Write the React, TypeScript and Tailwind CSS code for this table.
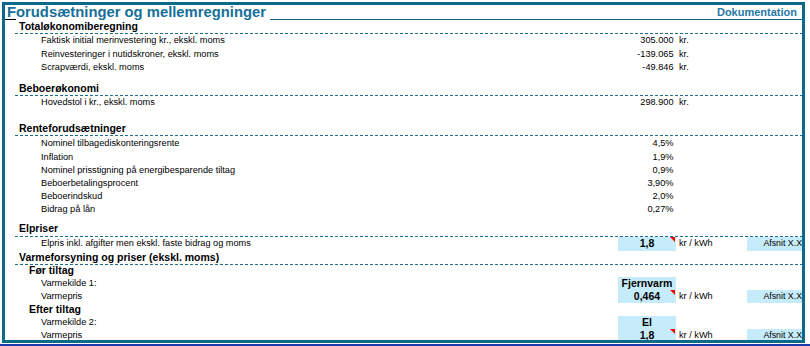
import React from "react";

const TEAL = "bg-[#0b6a8a]";

function Dash() {
  return (
    <div className="ml-[10px] h-px shrink-0 bg-[repeating-linear-gradient(to_right,#1d6d8a_0px,#1d6d8a_3px,transparent_3px,transparent_5px)]" />
  );
}

function Tri() {
  return (
    <svg className="absolute top-0 right-[1px]" width="5" height="5" viewBox="0 0 5 5">
      <polygon points="0,0 5,0 5,5" fill="#ff0000" />
    </svg>
  );
}

type RowProps = {
  h: string;
  label?: string;
  kind?: "head" | "sub" | "label";
  value?: string;
  cell?: string;
  tri?: boolean;
  unit?: string;
  afsnit?: boolean;
};

function Row({ h, label, kind = "label", value, cell, tri, unit, afsnit }: RowProps) {
  const labelCls =
    kind === "head"
      ? "pl-[14px] text-[10.5px] font-bold"
      : kind === "sub"
      ? "pl-[24px] text-[10.5px] font-bold"
      : "pl-[36px] text-[9.2px]";
  return (
    <div className={`flex shrink-0 ${h}`}>
      <div className={`flex w-[613px] items-center whitespace-nowrap ${labelCls}`}>{label}</div>
      <div
        className={`relative flex w-[58px] items-center ${
          cell !== undefined ? "justify-center bg-[#c6ebfa] text-[10.5px] font-bold" : "justify-end pr-[2.5px] text-[9.2px]"
        }`}
      >
        {cell !== undefined ? cell : value}
        {tri && <Tri />}
      </div>
      <div className="flex w-[71px] items-center pl-[3px] text-[9.2px] whitespace-nowrap">{unit}</div>
      <div
        className={`flex w-[55px] items-center justify-end text-[8.8px] whitespace-nowrap ${
          afsnit ? "bg-[#c6ebfa]" : ""
        }`}
      >
        {afsnit ? "Afsnit X.X" : ""}
      </div>
    </div>
  );
}

export default function App() {
  return (
    <div className="h-[346px] w-[810px] overflow-hidden bg-white font-['Liberation_Sans',Arial,sans-serif] text-black">
      <div className="ml-[2px] mt-[2px] h-[341px] w-[803px] border-[3px] border-[#0b6a8a]">
        <div className="flex h-[335px] flex-col overflow-hidden">
          <div className="flex h-[14px] shrink-0 items-center justify-between">
            <div className="ml-[2px] text-[14.8px] leading-[14px] font-bold whitespace-nowrap text-[#15709a]">
              Forudsætninger og mellemregninger
            </div>
            <div className="mr-[5px] text-[11px] leading-[14px] font-bold text-[#2479a6]">Dokumentation</div>
          </div>
          <div className="flex h-px shrink-0">
            <div className="w-[11px] bg-black" />
            <div className="w-[254px]" />
            <div className={`flex-1 ${TEAL}`} />
          </div>
          <Row h="h-[13px]" kind="head" label="Totaløkonomiberegning" />
          <Dash />
          <Row h="h-[14px]" label="Faktisk initial merinvestering kr., ekskl. moms" value="305.000" unit="kr." />
          <Row h="h-[13px]" label="Reinvesteringer i nutidskroner, ekskl. moms" value="-139.065" unit="kr." />
          <Row h="h-[14px]" label="Scrapværdi, ekskl. moms" value="-49.846" unit="kr." />
          <div className="h-[7px] shrink-0" />
          <Row h="h-[13px]" kind="head" label="Beboerøkonomi" />
          <Dash />
          <Row h="h-[13px]" label="Hovedstol i kr., ekskl. moms" value="298.900" unit="kr." />
          <div className="h-[13px] shrink-0" />
          <Row h="h-[13px]" kind="head" label="Renteforudsætninger" />
          <Dash />
          <Row h="h-[15px]" label="Nominel tilbagediskonteringsrente" value="4,5%" />
          <Row h="h-[13px]" label="Inflation" value="1,9%" />
          <Row h="h-[14px]" label="Nominel prisstigning på energibesparende tiltag" value="0,9%" />
          <Row h="h-[12px]" label="Beboerbetalingsprocent" value="3,90%" />
          <Row h="h-[13px]" label="Beboerindskud" value="2,0%" />
          <Row h="h-[13px]" label="Bidrag på lån" value="0,27%" />
          <div className="h-[6px] shrink-0" />
          <Row h="h-[14px]" kind="head" label="Elpriser" />
          <Dash />
          <Row
            h="h-[14px]"
            label="Elpris inkl. afgifter men ekskl. faste bidrag og moms"
            cell="1,8"
            tri
            unit="kr / kWh"
            afsnit
          />
          <Row h="h-[13px]" kind="head" label="Varmeforsyning og priser (ekskl. moms)" />
          <Dash />
          <Row h="h-[12px]" kind="sub" label="Før tiltag" />
          <Row h="h-[13px]" label="Varmekilde 1:" cell="Fjernvarm" />
          <Row h="h-[13px]" label="Varmepris" cell="0,464" tri unit="kr / kWh" afsnit />
          <Row h="h-[13px]" kind="sub" label="Efter tiltag" />
          <Row h="h-[13px]" label="Varmekilde 2:" cell="El" />
          <Row h="h-[14px]" label="Varmepris" cell="1,8" tri unit="kr / kWh" afsnit />
        </div>
      </div>
      <div className="mt-px h-[2px] w-[810px] bg-[#1c3aa9]" />
    </div>
  );
}
